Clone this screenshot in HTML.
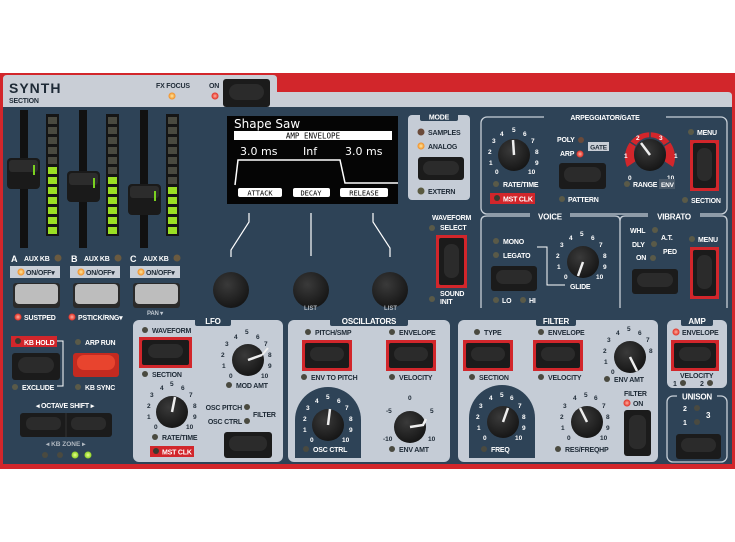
<!DOCTYPE html>
<html><head><meta charset="utf-8"><style>
html,body{margin:0;padding:0;background:#fff;width:735px;height:542px;overflow:hidden}
svg{display:block}
text{font-family:"Liberation Sans",sans-serif;font-weight:bold}
.w{fill:#fff;font-size:7px;letter-spacing:-0.2px}
.d{fill:#1e2a36;font-size:7px;letter-spacing:-0.2px}
.n{fill:#fff;font-size:6.5px}
.nd{fill:#1e2a36;font-size:6.5px}
</style></head><body>
<svg width="735" height="542" viewBox="0 0 735 542" xmlns="http://www.w3.org/2000/svg">
<defs>
<radialGradient id="kn" cx="40%" cy="35%" r="70%"><stop offset="0" stop-color="#3a3a3a"/><stop offset="1" stop-color="#141414"/></radialGradient>
<radialGradient id="lo" cx="50%" cy="50%" r="50%"><stop offset="0" stop-color="#ffe9a0"/><stop offset="1" stop-color="#f08a20"/></radialGradient>
<radialGradient id="lr" cx="50%" cy="50%" r="50%"><stop offset="0" stop-color="#ffb0a0"/><stop offset="1" stop-color="#e02a20"/></radialGradient>
<radialGradient id="lg" cx="50%" cy="50%" r="50%"><stop offset="0" stop-color="#eaff90"/><stop offset="1" stop-color="#8ad020"/></radialGradient>
</defs>
<rect x="0" y="73" width="735" height="396" fill="#d2262b"/>
<rect x="3" y="107" width="729" height="357" fill="#2e4357"/>
<path d="M3 79 Q3 75 7 75 L273 75 Q277 75 277 79 L277 92 L728 92 Q732 92 732 96 L732 107 L3 107 Z" fill="#c9ced6"/>
<text x="9" y="93" style="font-size:14px;fill:#1e2a36;letter-spacing:1px">SYNTH</text>
<text x="9" y="103" class="d" style="font-size:7px">SECTION</text>
<text x="156" y="88" class="d" style="font-size:7px">FX FOCUS</text>
<circle cx="172" cy="96" r="3.5" fill="url(#lo)"/>
<text x="209" y="88" class="d" style="font-size:7px">ON</text>
<circle cx="215" cy="96" r="3.5" fill="url(#lr)"/>
<rect x="223" y="79" width="47" height="28" rx="3" fill="#1b1b1b"/><rect x="229" y="84" width="35" height="16" rx="8" fill="#2b2b2b"/>

<g>
<rect x="20" y="110" width="8" height="138" fill="#111"/>
<rect x="79" y="110" width="8" height="138" fill="#111"/>
<rect x="140" y="110" width="8" height="138" fill="#111"/>
<rect x="7" y="158" width="33" height="31" rx="4" fill="#1a1a1a"/><rect x="9" y="160" width="29" height="12" rx="3" fill="#2c2c2c"/><rect x="33" y="165" width="2" height="10" fill="#7ad020"/>
<rect x="67" y="171" width="33" height="31" rx="4" fill="#1a1a1a"/><rect x="69" y="173" width="29" height="12" rx="3" fill="#2c2c2c"/><rect x="93" y="178" width="2" height="10" fill="#7ad020"/>
<rect x="128" y="184" width="33" height="31" rx="4" fill="#1a1a1a"/><rect x="130" y="186" width="29" height="12" rx="3" fill="#2c2c2c"/><rect x="154" y="191" width="2" height="10" fill="#7ad020"/>
</g>
<rect x="46" y="114" width="13" height="122" fill="#151515"/>
<rect x="106" y="114" width="13" height="122" fill="#151515"/>
<rect x="166" y="114" width="13" height="122" fill="#151515"/>
<g fill="#4a4a40">
<rect x="48" y="117" width="9" height="7"/><rect x="48" y="127" width="9" height="7"/><rect x="48" y="137" width="9" height="7"/><rect x="48" y="147" width="9" height="7"/><rect x="48" y="157" width="9" height="7"/>
<rect x="108" y="117" width="9" height="7"/><rect x="108" y="127" width="9" height="7"/><rect x="108" y="137" width="9" height="7"/><rect x="108" y="147" width="9" height="7"/><rect x="108" y="157" width="9" height="7"/><rect x="108" y="167" width="9" height="7"/>
<rect x="168" y="117" width="9" height="7"/><rect x="168" y="127" width="9" height="7"/><rect x="168" y="137" width="9" height="7"/><rect x="168" y="147" width="9" height="7"/><rect x="168" y="157" width="9" height="7"/><rect x="168" y="167" width="9" height="7"/><rect x="168" y="177" width="9" height="7"/>
</g>
<g fill="#9be024">
<rect x="48" y="167" width="9" height="7"/><rect x="48" y="177" width="9" height="7"/><rect x="48" y="187" width="9" height="7"/><rect x="48" y="197" width="9" height="7"/><rect x="48" y="207" width="9" height="7"/><rect x="48" y="217" width="9" height="7"/><rect x="48" y="227" width="9" height="7"/>
<rect x="108" y="177" width="9" height="7"/><rect x="108" y="187" width="9" height="7"/><rect x="108" y="197" width="9" height="7"/><rect x="108" y="207" width="9" height="7"/><rect x="108" y="217" width="9" height="7"/><rect x="108" y="227" width="9" height="7"/>
<rect x="168" y="187" width="9" height="7"/><rect x="168" y="197" width="9" height="7"/><rect x="168" y="207" width="9" height="7"/><rect x="168" y="217" width="9" height="7"/><rect x="168" y="227" width="9" height="7"/>
</g>

<text x="11" y="262" class="w" style="font-size:9px">A</text><text x="24" y="261" class="w">AUX KB</text><circle cx="58" cy="258" r="3.5" fill="#6a5a40"/>
<text x="71" y="262" class="w" style="font-size:9px">B</text><text x="84" y="261" class="w">AUX KB</text><circle cx="118" cy="258" r="3.5" fill="#6a5a40"/>
<text x="130" y="262" class="w" style="font-size:9px">C</text><text x="143" y="261" class="w">AUX KB</text><circle cx="177" cy="258" r="3.5" fill="#6a5a40"/>
<rect x="10" y="266" width="50" height="12" fill="#c9ced6"/><circle cx="21" cy="272" r="3.5" fill="url(#lo)"/><text x="26" y="275" class="d">ON/OFF▾</text>
<rect x="70" y="266" width="50" height="12" fill="#c9ced6"/><circle cx="81" cy="272" r="3.5" fill="url(#lo)"/><text x="86" y="275" class="d">ON/OFF▾</text>
<rect x="130" y="266" width="50" height="12" fill="#c9ced6"/><circle cx="141" cy="272" r="3.5" fill="url(#lo)"/><text x="146" y="275" class="d">ON/OFF▾</text>
<rect x="13" y="283" width="47" height="25" rx="3" fill="#2a2a2a"/><rect x="15" y="284" width="43" height="20" rx="4" fill="#bdbdbd"/>
<rect x="73" y="283" width="47" height="25" rx="3" fill="#2a2a2a"/><rect x="75" y="284" width="43" height="20" rx="4" fill="#bdbdbd"/>
<rect x="133" y="283" width="47" height="25" rx="3" fill="#2a2a2a"/><rect x="135" y="284" width="43" height="20" rx="4" fill="#bdbdbd"/>
<circle cx="18" cy="317" r="3.5" fill="url(#lr)"/><text x="24" y="320" class="w">SUSTPED</text>
<circle cx="72" cy="317" r="3.5" fill="url(#lr)"/><text x="78" y="320" class="w">PSTICK/RNG▾</text>
<text x="147" y="315" class="w" style="font-size:6px;fill:#c0c8d0">PAN ▾</text>

<rect x="11" y="336" width="46" height="11" fill="#d2262b"/><circle cx="18" cy="341" r="3" fill="#3a3a30"/><text x="24" y="345" class="w">KB HOLD</text>
<path d="M57 341 H63 V386 H57" stroke="#fff" fill="none"/>
<rect x="12" y="353" width="48" height="27" rx="3" fill="#1b1b1b"/><rect x="18" y="357" width="36" height="16" rx="8" fill="#2b2b2b"/>
<circle cx="15" cy="387" r="3" fill="#5a5a48"/><text x="22" y="390" class="w">EXCLUDE</text>
<circle cx="78" cy="342" r="3" fill="#5a5a48"/><text x="85" y="345" class="w">ARP RUN</text>
<rect x="73" y="353" width="46" height="24" rx="3" fill="#c42a20"/><rect x="77" y="355" width="38" height="15" rx="7" fill="#e8442e"/>
<circle cx="78" cy="387" r="3" fill="#5a5a48"/><text x="85" y="390" class="w">KB SYNC</text>
<text x="36" y="408" class="w">◂ OCTAVE SHIFT ▸</text>
<rect x="20" y="413" width="92" height="24" rx="3" fill="#1b1b1b"/><line x1="66" y1="413" x2="66" y2="437" stroke="#333"/>
<rect x="26" y="417" width="35" height="13" rx="6" fill="#2b2b2b"/><rect x="71" y="417" width="35" height="13" rx="6" fill="#2b2b2b"/>
<text x="46" y="446" class="n" style="fill:#b0b8c0">◂ KB ZONE ▸</text>
<circle cx="45" cy="455" r="3" fill="#4a4a40"/><circle cx="60" cy="455" r="3" fill="#4a4a40"/><circle cx="75" cy="455" r="3.5" fill="url(#lg)"/><circle cx="88" cy="455" r="3.5" fill="url(#lg)"/>

<rect x="227" y="116" width="171" height="88" fill="#050505"/>
<text x="234" y="128" style="font-size:12px;fill:#fff;font-weight:normal;font-family:'DejaVu Sans',sans-serif">Shape Saw</text>
<rect x="234" y="131" width="158" height="9" fill="#fff"/>
<text x="313" y="138.5" text-anchor="middle" style="font-size:7.5px;fill:#000;font-weight:normal;font-family:'DejaVu Sans Mono',monospace">AMP ENVELOPE</text>
<text x="240" y="155" style="font-size:11px;fill:#fff;font-weight:normal;font-family:'DejaVu Sans',sans-serif">3.0 ms</text>
<text x="303" y="155" style="font-size:11px;fill:#fff;font-weight:normal;font-family:'DejaVu Sans',sans-serif">Inf</text>
<text x="345" y="155" style="font-size:11px;fill:#fff;font-weight:normal;font-family:'DejaVu Sans',sans-serif">3.0 ms</text>
<path d="M235 185 L238 160 L340 160 L345 183 L398 183" stroke="#fff" stroke-width="1.5" fill="none"/>
<rect x="238" y="188" width="44" height="9" rx="2" fill="#fff"/><text x="260" y="195.5" text-anchor="middle" style="font-size:7px;fill:#000;font-family:'DejaVu Sans Mono',monospace;font-weight:normal">ATTACK</text>
<rect x="293" y="188" width="37" height="9" rx="2" fill="#fff"/><text x="311" y="195.5" text-anchor="middle" style="font-size:7px;fill:#000;font-family:'DejaVu Sans Mono',monospace;font-weight:normal">DECAY</text>
<rect x="340" y="188" width="48" height="9" rx="2" fill="#fff"/><text x="364" y="195.5" text-anchor="middle" style="font-size:7px;fill:#000;font-family:'DejaVu Sans Mono',monospace;font-weight:normal">RELEASE</text>
<path d="M249 213 V222 L231 250 V257" stroke="#fff" fill="none" stroke-width="1.2"/>
<path d="M311 213 V256" stroke="#fff" fill="none" stroke-width="1.2"/>
<path d="M373 213 V222 L390 248 V257" stroke="#fff" fill="none" stroke-width="1.2"/>
<circle cx="231" cy="290" r="18" fill="url(#kn)"/>
<circle cx="311" cy="290" r="18" fill="url(#kn)"/>
<circle cx="390" cy="290" r="18" fill="url(#kn)"/>
<text x="304" y="310" class="n" style="fill:#b0b8c0;font-size:6px">LIST</text>
<text x="384" y="310" class="n" style="fill:#b0b8c0;font-size:6px">LIST</text>

<rect x="408" y="115" width="62" height="85" rx="4" fill="#c5ccd6"/>
<rect x="420" y="112" width="38" height="9" rx="2" fill="#2e4357"/><text x="439" y="119.5" text-anchor="middle" class="w">MODE</text>
<circle cx="421" cy="132" r="3.5" fill="#6a4a3a"/><text x="428" y="135" class="d">SAMPLES</text>
<circle cx="421" cy="146" r="3.5" fill="url(#lo)"/><text x="428" y="149" class="d">ANALOG</text>
<rect x="418" y="157" width="46" height="23" rx="3" fill="#1b1b1b"/><rect x="423" y="161" width="36" height="14" rx="7" fill="#2b2b2b"/>
<circle cx="421" cy="191" r="3.5" fill="#5a5a40"/><text x="428" y="194" class="d">EXTERN</text>
<text x="432" y="220" class="w">WAVEFORM</text><circle cx="432" cy="228" r="3" fill="#5a5a48"/><text x="440" y="230" class="w">SELECT</text>
<rect x="436" y="235" width="31" height="53" fill="#d2262b"/><rect x="439" y="238" width="25" height="47" rx="2" fill="#1b1b1b"/><rect x="444" y="244" width="15" height="34" rx="7" fill="#2b2b2b"/>
<circle cx="432" cy="299" r="3" fill="#5a5a48"/><text x="440" y="296" class="w">SOUND</text><text x="440" y="304" class="w">INIT</text>

<rect x="481" y="117" width="246" height="97" rx="6" fill="none" stroke="#c8d0d8" stroke-width="1.3"/>
<rect x="544" y="112" width="122" height="10" fill="#2e4357"/><text x="605" y="120" text-anchor="middle" class="w">ARPEGGIATOR/GATE</text>
<circle cx="514" cy="155" r="16" fill="url(#kn)"/><line x1="514" y1="155" x2="513" y2="140" stroke="#eee" stroke-width="2.5"/>
<g class="n"><text x="495" y="174">0</text><text x="489" y="165">1</text><text x="488" y="154">2</text><text x="492" y="143">3</text><text x="500" y="136">4</text><text x="512" y="132">5</text><text x="523" y="136">6</text><text x="531" y="143">7</text><text x="535" y="154">8</text><text x="535" y="165">9</text><text x="528" y="174">10</text></g>
<circle cx="496" cy="184" r="3" fill="#5a5a48"/><text x="503" y="187" class="w">RATE/TIME</text>
<rect x="490" y="193" width="45" height="11" fill="#d2262b"/><circle cx="497" cy="198" r="3" fill="#3a3a30"/><text x="503" y="201.5" class="w">MST CLK</text>
<text x="557" y="142" class="w">POLY</text><circle cx="581" cy="140" r="3" fill="#6a4a3a"/>
<text x="560" y="156" class="w">ARP</text><circle cx="580" cy="154" r="3.5" fill="url(#lr)"/>
<rect x="588" y="142" width="21" height="9" fill="#c9ced6"/><text x="598.5" y="149.5" text-anchor="middle" class="d" style="font-size:6.5px">GATE</text>
<rect x="559" y="163" width="47" height="26" rx="3" fill="#1b1b1b"/><rect x="564" y="167" width="37" height="15" rx="7" fill="#2b2b2b"/>
<circle cx="562" cy="199" r="3" fill="#5a5a48"/><text x="568" y="202" class="w">PATTERN</text>
<path d="M627 167 A25 25 0 1 1 673 167 L664 161 A16 16 0 1 0 636 161 Z" fill="#d2262b"/>
<path d="M630 142 L638 147 M650 130 L650 139 M670 142 L662 147" stroke="#2e4357" stroke-width="1.5"/>
<g class="n"><text x="624" y="158">1</text><text x="636" y="140">2</text><text x="659" y="140">3</text><text x="674" y="158">1</text><text x="628" y="180">0</text><text x="667" y="180">10</text></g>
<circle cx="650" cy="155" r="16" fill="url(#kn)"/><line x1="650" y1="155" x2="641" y2="143" stroke="#eee" stroke-width="2.5"/>
<circle cx="627" cy="184" r="3" fill="#5a5a48"/><text x="633" y="187" class="w">RANGE</text><rect x="659" y="179" width="16" height="10" fill="#4a5a6a"/><text x="661" y="187" class="w" style="font-size:6.5px">ENV</text>
<circle cx="691" cy="132" r="3" fill="#5a5a48"/><text x="697" y="135" class="w">MENU</text>
<rect x="690" y="140" width="29" height="51" fill="#d2262b"/><rect x="693" y="143" width="23" height="45" rx="2" fill="#1b1b1b"/><rect x="697" y="148" width="15" height="33" rx="7" fill="#2b2b2b"/>
<circle cx="685" cy="200" r="3" fill="#5a5a48"/><text x="691" y="203" class="w">SECTION</text>

<path d="M487 216 H615 Q620 216 620 221 V308 M620 221 Q620 216 625 216 H722 Q727 216 727 221 V308 M487 216 Q481 216 481 221 V308" fill="none" stroke="#c8d0d8" stroke-width="1.3"/>
<rect x="530" y="211" width="40" height="10" fill="#2e4357"/><text x="550" y="219.5" text-anchor="middle" class="w" style="font-size:8px">VOICE</text>
<rect x="648" y="211" width="52" height="10" fill="#2e4357"/><text x="674" y="219.5" text-anchor="middle" class="w" style="font-size:8px">VIBRATO</text>
<circle cx="496" cy="241" r="3" fill="#5a5a48"/><text x="503" y="244" class="w">MONO</text>
<circle cx="496" cy="255" r="3" fill="#5a5a48"/><text x="503" y="258" class="w">LEGATO</text>
<path d="M537 247 H547 V285 H565" stroke="#fff" fill="none"/>
<rect x="491" y="266" width="46" height="25" rx="3" fill="#1b1b1b"/><rect x="496" y="270" width="36" height="14" rx="7" fill="#2b2b2b"/>
<circle cx="496" cy="300" r="3" fill="#5a5a48"/><text x="502" y="303" class="w">LO</text><circle cx="523" cy="300" r="3" fill="#5a5a48"/><text x="529" y="303" class="w">HI</text>
<circle cx="583" cy="262" r="16" fill="url(#kn)"/><line x1="583" y1="262" x2="578" y2="276" stroke="#eee" stroke-width="2.5"/>
<g class="n"><text x="564" y="279">0</text><text x="557" y="269">1</text><text x="556" y="258">2</text><text x="560" y="247">3</text><text x="569" y="240">4</text><text x="580" y="236">5</text><text x="591" y="240">6</text><text x="599" y="247">7</text><text x="603" y="258">8</text><text x="603" y="269">9</text><text x="596" y="279">10</text></g>
<text x="570" y="289" class="w">GLIDE</text>
<text x="630" y="233" class="w">WHL</text><circle cx="655" cy="230" r="3" fill="#5a5a48"/>
<text x="632" y="247" class="w">DLY</text><circle cx="654" cy="244" r="3" fill="#5a5a48"/>
<text x="636" y="260" class="w">ON</text><circle cx="653" cy="258" r="3" fill="#5a5a48"/>
<text x="661" y="240" class="w">A.T.</text><text x="663" y="254" class="w">PED</text>
<rect x="632" y="269" width="46" height="25" rx="3" fill="#1b1b1b"/><rect x="637" y="273" width="36" height="14" rx="7" fill="#2b2b2b"/>
<circle cx="692" cy="239" r="3" fill="#5a5a48"/><text x="698" y="242" class="w">MENU</text>
<rect x="690" y="247" width="29" height="52" fill="#d2262b"/><rect x="693" y="250" width="23" height="46" rx="2" fill="#1b1b1b"/><rect x="697" y="255" width="15" height="34" rx="7" fill="#2b2b2b"/>

<rect x="133" y="320" width="150" height="142" rx="6" fill="#c5ccd6"/>
<rect x="195" y="316" width="36" height="10" rx="2" fill="#2e4357"/><text x="213" y="324" text-anchor="middle" class="w" style="font-size:8px">LFO</text>
<circle cx="145" cy="330" r="3" fill="#4a4a40"/><text x="152" y="333" class="d">WAVEFORM</text>
<rect x="139" y="337" width="53" height="31" fill="#d2262b"/><rect x="142" y="340" width="47" height="25" rx="2" fill="#1b1b1b"/><rect x="148" y="344" width="35" height="14" rx="7" fill="#2b2b2b"/>
<circle cx="145" cy="374" r="3" fill="#4a4a40"/><text x="152" y="377" class="d">SECTION</text>
<circle cx="248" cy="360" r="16" fill="url(#kn)"/><line x1="248" y1="360" x2="262" y2="355" stroke="#eee" stroke-width="2.5"/><path d="M262 355 L268 348" stroke="#eee" stroke-width="2"/>
<g class="nd"><text x="229" y="378">0</text><text x="222" y="368">1</text><text x="221" y="357">2</text><text x="225" y="346">3</text><text x="234" y="339">4</text><text x="245" y="334">5</text><text x="256" y="339">6</text><text x="264" y="346">7</text><text x="268" y="357">8</text><text x="268" y="368">9</text><text x="261" y="378">10</text></g>
<circle cx="229" cy="385" r="3" fill="#4a4a40"/><text x="236" y="388" class="d">MOD AMT</text>
<circle cx="172" cy="412" r="16" fill="url(#kn)"/><line x1="172" y1="412" x2="175" y2="397" stroke="#eee" stroke-width="2.5"/>
<g class="nd"><text x="154" y="429">0</text><text x="147" y="419">1</text><text x="147" y="408">2</text><text x="150" y="397">3</text><text x="160" y="390">4</text><text x="170" y="386">5</text><text x="181" y="390">6</text><text x="189" y="397">7</text><text x="193" y="408">8</text><text x="193" y="419">9</text><text x="186" y="429">10</text></g>
<circle cx="155" cy="437" r="3" fill="#4a4a40"/><text x="162" y="440" class="d">RATE/TIME</text>
<rect x="150" y="446" width="44" height="11" fill="#d2262b"/><circle cx="156" cy="451" r="3" fill="#3a3a30"/><text x="162" y="454.5" class="w">MST CLK</text>
<text x="242" y="410" text-anchor="end" class="d">OSC PITCH</text><circle cx="247" cy="407" r="3" fill="#4a4a40"/>
<text x="242" y="424" text-anchor="end" class="d">OSC CTRL</text><circle cx="247" cy="421" r="3" fill="#4a4a40"/>
<text x="253" y="417" class="d">FILTER</text>
<rect x="224" y="432" width="48" height="26" rx="3" fill="#1b1b1b"/><rect x="229" y="436" width="38" height="15" rx="7" fill="#2b2b2b"/>

<rect x="288" y="320" width="162" height="142" rx="6" fill="#c5ccd6"/>
<rect x="330" y="316" width="78" height="10" rx="2" fill="#2e4357"/><text x="369" y="324" text-anchor="middle" class="w" style="font-size:8px">OSCILLATORS</text>
<circle cx="308" cy="332" r="3" fill="#4a4a40"/><text x="315" y="335" class="d">PITCH/SMP</text>
<rect x="302" y="340" width="50" height="31" fill="#d2262b"/><rect x="305" y="343" width="44" height="25" rx="2" fill="#1b1b1b"/><rect x="310" y="347" width="34" height="14" rx="7" fill="#2b2b2b"/>
<circle cx="304" cy="377" r="3" fill="#4a4a40"/><text x="311" y="380" class="d">ENV TO PITCH</text>
<circle cx="392" cy="332" r="3" fill="#4a4a40"/><text x="399" y="335" class="d">ENVELOPE</text>
<rect x="386" y="340" width="50" height="31" fill="#d2262b"/><rect x="389" y="343" width="44" height="25" rx="2" fill="#1b1b1b"/><rect x="394" y="347" width="34" height="14" rx="7" fill="#2b2b2b"/>
<circle cx="392" cy="377" r="3" fill="#4a4a40"/><text x="399" y="380" class="d">VELOCITY</text>
<path d="M295 458 V420 A33 33 0 0 1 361 420 V458 Z" fill="#2e4357"/>
<circle cx="328" cy="425" r="16" fill="url(#kn)"/><line x1="328" y1="425" x2="330" y2="409" stroke="#eee" stroke-width="2.5"/>
<g class="n"><text x="310" y="442">0</text><text x="303" y="432">1</text><text x="303" y="421">2</text><text x="306" y="410">3</text><text x="315" y="403">4</text><text x="326" y="399">5</text><text x="337" y="403">6</text><text x="345" y="410">7</text><text x="349" y="421">8</text><text x="349" y="432">9</text><text x="342" y="442">10</text></g>
<circle cx="306" cy="449" r="3" fill="#4a4a40"/><text x="313" y="452" class="w">OSC CTRL</text>
<circle cx="410" cy="427" r="16" fill="url(#kn)"/><path d="M410 427 L423 425 L426 419" stroke="#eee" stroke-width="2.5" fill="none"/>
<g class="nd"><text x="408" y="400">0</text><text x="386" y="413">-5</text><text x="430" y="413">5</text><text x="383" y="441">-10</text><text x="428" y="441">10</text></g>
<circle cx="392" cy="449" r="3" fill="#4a4a40"/><text x="399" y="452" class="d">ENV AMT</text>

<rect x="458" y="320" width="200" height="142" rx="6" fill="#c5ccd6"/>
<rect x="536" y="316" width="40" height="10" rx="2" fill="#2e4357"/><text x="556" y="324" text-anchor="middle" class="w" style="font-size:8px">FILTER</text>
<circle cx="477" cy="332" r="3" fill="#4a4a40"/><text x="484" y="335" class="d">TYPE</text>
<rect x="463" y="340" width="50" height="31" fill="#d2262b"/><rect x="466" y="343" width="44" height="25" rx="2" fill="#1b1b1b"/><rect x="471" y="347" width="34" height="14" rx="7" fill="#2b2b2b"/>
<circle cx="472" cy="377" r="3" fill="#4a4a40"/><text x="479" y="380" class="d">SECTION</text>
<circle cx="541" cy="332" r="3" fill="#4a4a40"/><text x="548" y="335" class="d">ENVELOPE</text>
<rect x="533" y="340" width="50" height="31" fill="#d2262b"/><rect x="536" y="343" width="44" height="25" rx="2" fill="#1b1b1b"/><rect x="541" y="347" width="34" height="14" rx="7" fill="#2b2b2b"/>
<circle cx="541" cy="377" r="3" fill="#4a4a40"/><text x="548" y="380" class="d">VELOCITY</text>
<circle cx="630" cy="357" r="16" fill="url(#kn)"/><line x1="630" y1="357" x2="637" y2="371" stroke="#eee" stroke-width="2.5"/>
<g class="nd"><text x="611" y="374">0</text><text x="604" y="364">1</text><text x="603" y="353">2</text><text x="607" y="342">3</text><text x="616" y="335">4</text><text x="627" y="331">5</text><text x="638" y="335">6</text><text x="646" y="342">7</text><text x="649" y="353">8</text></g>
<circle cx="607" cy="379" r="3" fill="#4a4a40"/><text x="614" y="382" class="d">ENV AMT</text>
<path d="M469 458 V418 A33 33 0 0 1 535 418 V458 Z" fill="#2e4357"/>
<circle cx="503" cy="422" r="16" fill="url(#kn)"/><line x1="503" y1="422" x2="508" y2="408" stroke="#eee" stroke-width="2.5"/>
<g class="n"><text x="483" y="440">0</text><text x="477" y="430">1</text><text x="476" y="419">2</text><text x="479" y="408">3</text><text x="489" y="400">4</text><text x="500" y="397">5</text><text x="510" y="400">6</text><text x="518" y="408">7</text><text x="522" y="419">8</text><text x="522" y="430">9</text><text x="515" y="440">10</text></g>
<circle cx="484" cy="449" r="3" fill="#4a4a40"/><text x="491" y="452" class="w">FREQ</text>
<circle cx="587" cy="422" r="16" fill="url(#kn)"/><line x1="587" y1="422" x2="580" y2="408" stroke="#eee" stroke-width="2.5"/>
<g class="nd"><text x="567" y="440">0</text><text x="561" y="430">1</text><text x="560" y="419">2</text><text x="563" y="408">3</text><text x="573" y="400">4</text><text x="584" y="397">5</text><text x="594" y="400">6</text><text x="602" y="408">7</text><text x="606" y="419">8</text><text x="606" y="430">9</text><text x="600" y="440">10</text></g>
<circle cx="558" cy="449" r="3" fill="#4a4a40"/><text x="565" y="452" class="d">RES/FREQHP</text>
<text x="624" y="396" class="d">FILTER</text><circle cx="627" cy="403" r="3.5" fill="url(#lr)"/><text x="633" y="406" class="d">ON</text>
<rect x="624" y="410" width="27" height="46" rx="3" fill="#1b1b1b"/><rect x="629" y="415" width="17" height="34" rx="7" fill="#2b2b2b"/>

<rect x="667" y="320" width="60" height="68" rx="6" fill="#c5ccd6"/>
<rect x="681" y="316" width="32" height="10" rx="2" fill="#2e4357"/><text x="697" y="324" text-anchor="middle" class="w" style="font-size:8px">AMP</text>
<circle cx="676" cy="332" r="3.5" fill="url(#lr)"/><text x="682" y="335" class="d">ENVELOPE</text>
<rect x="671" y="340" width="48" height="31" fill="#d2262b"/><rect x="674" y="343" width="42" height="25" rx="2" fill="#1b1b1b"/><rect x="679" y="347" width="32" height="14" rx="7" fill="#2b2b2b"/>
<text x="680" y="378" class="d">VELOCITY</text>
<text x="673" y="386" class="nd" style="font-size:7px">1</text><circle cx="683" cy="383" r="3" fill="#4a4a40"/>
<text x="700" y="386" class="nd" style="font-size:7px">2</text><circle cx="710" cy="383" r="3" fill="#4a4a40"/>
<rect x="667" y="396" width="60" height="66" rx="6" fill="none" stroke="#c8d0d8" stroke-width="1.3"/>
<rect x="677" y="391" width="40" height="10" fill="#2e4357"/><text x="697" y="399.5" text-anchor="middle" class="w" style="font-size:8px">UNISON</text>
<text x="683" y="411" class="w">2</text><circle cx="697" cy="408" r="3" fill="#4a4a40"/>
<text x="683" y="425" class="w">1</text><circle cx="697" cy="422" r="3" fill="#4a4a40"/>
<text x="706" y="418" class="w" style="font-size:8px">3</text>
<rect x="676" y="434" width="45" height="25" rx="3" fill="#1b1b1b"/><rect x="681" y="438" width="35" height="14" rx="7" fill="#2b2b2b"/>
</svg>
</body></html>
